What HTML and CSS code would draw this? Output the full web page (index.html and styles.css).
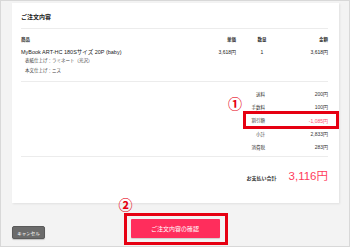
FILE: index.html
```html
<!DOCTYPE html>
<html lang="ja">
<head>
<meta charset="utf-8">
<link rel="stylesheet" href="styles.css">
</head>
<body>
<div class="page">
  <div class="card">
    <div class="title">ご注文内容</div>
    <div class="items">
      <div class="grid head">
        <div>商品</div>
        <div class="r">単価</div>
        <div class="c">数量</div>
        <div class="r">金額</div>
      </div>
      <div class="grid prod">
        <div>MyBook ART-HC 180Sサイズ 20P (baby)</div>
        <div class="r">3,618円</div>
        <div class="c">1</div>
        <div class="r">3,618円</div>
      </div>
      <div class="opt">表紙仕上げ：ラミネート（光沢）</div>
      <div class="opt">本文仕上げ：ニス</div>
    </div>
    <div class="summary">
      <div class="srow"><span class="lbl">送料</span><span class="val">200円</span></div>
      <div class="srow"><span class="lbl">手数料</span><span class="val">100円</span></div>
      <div class="srow discount"><span class="lbl">割引額</span><span class="val neg">-1,085円</span><span class="hl"></span><span class="mark m1">①</span></div>
      <div class="srow"><span class="lbl">小計</span><span class="val">2,833円</span></div>
      <div class="srow"><span class="lbl">消費税</span><span class="val">283円</span></div>
    </div>
    <div class="total">
      <span class="tlbl">お支払い合計</span>
      <span class="tval">3,116円</span>
    </div>
  </div>
  <div class="actions">
    <div class="left"><button class="cancel">キャンセル</button></div>
    <div class="confirm-wrap">
      <span class="mark m2">②</span>
      <button class="confirm">ご注文内容の確認</button>
    </div>
    <div></div>
  </div>
</div>
</body>
</html>
```
FILE: styles.css
```css
* { box-sizing: border-box; }
html, body { margin: 0; padding: 0; }
body {
  font-family: "Liberation Sans", "Noto Sans CJK JP", sans-serif;
  color: #333;
  background: #f3f3f3;
}
.page {
  width: 350px;
  height: 247px;
  border: 1px solid #d8d8d8;
  background: #f3f3f3;
  padding: 2px 10px 0 11px;
  display: flex;
  flex-direction: column;
}
.card {
  background: #fff;
  height: 200px;
  padding: 0 11px 0 9px;
  box-shadow: 1px 1px 2px rgba(0,0,0,0.08);
}
.title {
  padding-top: 10px;
  padding-bottom: 7px;
  font-size: 6px;
  line-height: 8px;
  font-weight: bold;
  color: #222;
  border-bottom: 1px solid #ececec;
}
.items {
  padding-top: 7px;
  padding-bottom: 5px;
  border-bottom: 1px solid #ececec;
}
.grid {
  display: grid;
  grid-template-columns: 1fr 40px 52px 40px;
  font-size: 5px;
  line-height: 8px;
}
.head { font-weight: bold; font-size: 4.5px; }
.prod { margin-top: 4px; font-size: 5.5px; color: #222; }
.prod .r, .prod .c { font-size: 5px; }
.r { text-align: right; }
.c { text-align: center; }
.opt {
  font-size: 4.5px;
  line-height: 10px;
  padding-left: 4px;
  color: #444;
}
.opt:first-of-type { margin-top: 2px; }
.summary {
  display: flex;
  flex-direction: column;
  align-items: flex-end;
  padding-top: 5px;
  padding-bottom: 3px;
  border-bottom: 1px solid #ececec;
}
.srow {
  position: relative;
  display: grid;
  grid-template-columns: 22px 63px;
  height: 13.3px;
  align-items: center;
  font-size: 4.5px;
}
.lbl { text-align: right; }
.val { text-align: right; font-size: 5px; }
.neg { color: #ff4f6e; }
.hl {
  position: absolute;
  left: 0;
  right: -11px;
  top: -3px;
  bottom: -2px;
  border: 3px solid #e60012;
}
.mark {
  position: absolute;
  color: #e60012;
  font-family: "Noto Sans CJK JP", sans-serif;
  font-size: 14px;
  line-height: 14px;
  font-weight: bold;
}
.m1 { left: -15px; top: -18px; }
.m2 { left: -8px; top: -19px; }
.total {
  display: flex;
  justify-content: flex-end;
  align-items: baseline;
  gap: 12px;
  padding-top: 10px;
}
.tlbl { font-size: 5px; font-weight: bold; color: #333; }
.tval {
  font-family: "Liberation Sans", "Noto Sans CJK JP", sans-serif;
  font-size: 11.5px;
  color: #ff3b5c;
}
.actions {
  display: grid;
  grid-template-columns: 1fr auto 1fr;
  align-items: end;
  margin-top: 10px;
}
.left { padding-bottom: 6px; }
.cancel {
  width: 33px;
  height: 13px;
  padding: 0;
  border: 1px solid #5a5a5a;
  border-radius: 2px;
  background: #6b6b6b;
  color: #fff;
  font-family: "Noto Sans CJK JP", sans-serif;
  font-size: 4.5px;
  box-shadow: 0 1px 1px rgba(0,0,0,0.2);
}
.confirm-wrap {
  position: relative;
  border: 3px solid #e60012;
  padding: 3px 5px 4px 4px;
  width: 104px;
  height: 32px;
}
.confirm {
  display: block;
  width: 89px;
  height: 19px;
  padding: 0;
  border: none;
  border-radius: 1px;
  background: #ff2d5c;
  color: #fff;
  font-family: "Noto Sans CJK JP", sans-serif;
  font-size: 6px;
  box-shadow: 0 1px 1px rgba(0,0,0,0.15);
}
```
